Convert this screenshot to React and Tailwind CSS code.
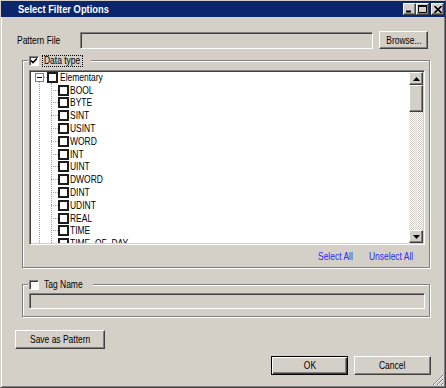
const items = ["BOOL","BYTE","SINT","USINT","WORD","INT","UINT","DWORD","DINT","UDINT","REAL","TIME","TIME_OF_DAY","DATE"];

function T({ children, className = "" }) {
  return <span className={"inline-block whitespace-nowrap origin-left scale-x-[0.77] " + className}>{children}</span>;
}
function TC({ children }) {
  return <span className="inline-block whitespace-nowrap origin-center scale-x-[0.77]">{children}</span>;
}

function RaisedBtn({ className = "", children }) {
  return (
    <div className={"flex items-center justify-center bg-[#d4d0c8] border border-t-white border-l-white border-r-[#404040] border-b-[#404040] shadow-[inset_-1px_-1px_0_#808080] " + className}>
      {children}
    </div>
  );
}

function TreeBox() {
  return <div className="w-[11px] h-[11px] shrink-0 bg-white border-2 border-[#1c1c1c]" />;
}

function SunkenCheck({ checked }) {
  return (
    <div className="w-[10px] h-[10px] shrink-0 bg-white border border-t-[#808080] border-l-[#808080] border-r-white border-b-white shadow-[inset_1px_1px_0_#404040] flex items-center justify-center">
      {checked && (
        <svg width="8" height="8" viewBox="0 0 8 8">
          <path d="M1 3.5 L3 5.5 L7 1.5" stroke="#000" strokeWidth="1.6" fill="none" />
        </svg>
      )}
    </div>
  );
}

function ScrollArrow({ up }) {
  return (
    <RaisedBtn className="h-[13px] w-full">
      <svg width="7" height="4" viewBox="0 0 7 4">
        {up ? <path d="M3.5 0 L7 4 L0 4 Z" fill="#000" /> : <path d="M0 0 L7 0 L3.5 4 Z" fill="#000" />}
      </svg>
    </RaisedBtn>
  );
}

export default function App() {
  return (
    <div className="w-[446px] h-[388px] bg-[#d4d0c8] relative overflow-hidden flex flex-col border border-t-[#d4d0c8] border-l-[#d4d0c8] border-r-[#404040] border-b-[#404040] shadow-[inset_1px_1px_0_#fff,inset_-1px_-1px_0_#808080] font-['Liberation_Sans',Arial,sans-serif] text-[11px] text-black leading-none">
      {/* Title bar */}
      <div className="h-[16px] bg-[#0c266e] flex items-center justify-between pl-[17px] pr-[1px] shrink-0">
        <span className="inline-block whitespace-nowrap origin-left scale-x-[0.85] text-white font-bold text-[11px]">Select Filter Options</span>
        <div className="flex items-center">
          <RaisedBtn className="w-[13px] h-[12px]">
            <svg width="9" height="8" viewBox="0 0 9 8"><rect x="1" y="5.5" width="5" height="2" fill="#000" /></svg>
          </RaisedBtn>
          <RaisedBtn className="w-[13px] h-[12px]">
            <svg width="9" height="8" viewBox="0 0 9 8"><path d="M0.5 0.5 H8.5 V7.5 H0.5 Z" stroke="#000" fill="none" /><rect x="0" y="0" width="9" height="2" fill="#000" /></svg>
          </RaisedBtn>
          <RaisedBtn className="w-[13px] h-[12px] ml-[2px]">
            <svg width="8" height="7" viewBox="0 0 8 7"><path d="M0.5 0 L7.5 7 M7.5 0 L0.5 7" stroke="#000" strokeWidth="1.6" /></svg>
          </RaisedBtn>
        </div>
      </div>

      <div className="flex flex-col px-[14px]">
        {/* Pattern file row */}
        <div className="mt-[14px] h-[18px] flex items-center">
          <span className="ml-[2px] w-[63px]"><T>Pattern File</T></span>
          <div className="w-[293px] h-[17px] border border-t-[#808080] border-l-[#808080] border-r-white border-b-white shadow-[inset_1px_1px_0_#404040]" />
          <RaisedBtn className="ml-[6px] w-[49px] h-[18px]"><TC>Browse...</TC></RaisedBtn>
        </div>

        {/* Data type group */}
        <fieldset className="mt-[5px] ml-[7px] w-[408px] min-w-0 border border-[#808080] shadow-[inset_1px_1px_0_#fff,1px_1px_0_#fff] pt-[3px] pb-[4px] px-0">
          <legend className="ml-[5px] pl-[1px] pr-[8px] bg-[#d4d0c8]">
            <div className="h-[13px] flex items-center">
              <SunkenCheck checked />
              <span className="ml-[3px] w-[41px] pl-[1px] h-[12px] flex items-center border border-dotted border-black"><T>Data type</T></span>
            </div>
          </legend>
          <div className="pl-[6px]">
            <div className="w-[396px] h-[175px] flex border border-t-[#808080] border-l-[#808080] border-r-white border-b-white shadow-[inset_1px_1px_0_#404040,inset_-1px_-1px_0_#d4d0c8] p-[1px]">
              <div className="relative flex-1 bg-white overflow-hidden">
                <div className="absolute left-[8px] top-[10px] bottom-0 border-l border-dotted border-[#a0a0a0]" />
                <div className="absolute left-[20px] top-[11px] bottom-0 border-l border-dotted border-[#a0a0a0]" />
                <div className="-mt-[1px] flex flex-col">
                  <div className="h-[12.8px] flex items-center pl-[4px]">
                    <div className="w-[9px] h-[9px] bg-white border border-[#808080] flex items-center justify-center shrink-0">
                      <div className="w-[5px] h-[1px] bg-black" />
                    </div>
                    <div className="w-[3px] border-t border-dotted border-[#a0a0a0]" />
                    <TreeBox />
                    <span className="ml-[2px]"><T>Elementary</T></span>
                  </div>
                  {items.map((t) => (
                    <div key={t} className="h-[12.8px] flex items-center pl-[20px] shrink-0">
                      <div className="w-[7px] border-t border-dotted border-[#a0a0a0]" />
                      <TreeBox />
                      <span className="ml-[1px]"><T className="scale-x-[0.8]">{t}</T></span>
                    </div>
                  ))}
                </div>
              </div>
              <div className="w-[14px] flex flex-col">
                <ScrollArrow up />
                <RaisedBtn className="h-[27px] w-full" />
                <div className="flex-1 bg-[repeating-conic-gradient(#d4d0c8_0_25%,#ffffff_0_50%)] bg-[length:2px_2px]" />
                <ScrollArrow />
              </div>
            </div>
            <div className="mt-[5px] h-[13px] w-[396px] flex items-center justify-end gap-[16px] pr-[11px] text-[#2a2aff]">
              <span className="w-[35px] underline"><T>Select All</T></span>
              <span className="w-[45px] underline"><T>Unselect All</T></span>
            </div>
          </div>
        </fieldset>

        {/* Tag name group */}
        <fieldset className="mt-[10px] ml-[7px] w-[408px] min-w-0 border border-[#808080] shadow-[inset_1px_1px_0_#fff,1px_1px_0_#fff] pt-[2px] pb-[7px] px-0">
          <legend className="ml-[5px] pl-[1px] pr-[9px] bg-[#d4d0c8]">
            <div className="h-[13px] flex items-center">
              <SunkenCheck />
              <span className="ml-[5px] w-[40px]"><T>Tag Name</T></span>
            </div>
          </legend>
          <div className="pl-[6px]">
            <div className="w-[396px] h-[16px] border border-t-[#808080] border-l-[#808080] border-r-white border-b-white shadow-[inset_1px_1px_0_#404040]" />
          </div>
        </fieldset>

        <RaisedBtn className="mt-[13px] w-[90px] h-[19px]"><TC>Save as Pattern</TC></RaisedBtn>

        <div className="mt-[7px] flex justify-end gap-[6px]">
          <div className="w-[77px] h-[19px] flex items-center justify-center border border-black shadow-[inset_1px_1px_0_#fff,inset_-1px_-1px_0_#404040,inset_-2px_-2px_0_#808080]"><TC>OK</TC></div>
          <RaisedBtn className="w-[77px] h-[19px]"><TC>Cancel</TC></RaisedBtn>
        </div>
      </div>

      {/* Resize grip */}
      <svg className="absolute right-[1px] bottom-[1px]" width="12" height="12" viewBox="0 0 12 12">
        <path d="M11 1 L1 11 M11 5 L5 11 M11 9 L9 11" stroke="#808080" strokeWidth="1" />
        <path d="M11 2 L2 11 M11 6 L6 11 M11 10 L10 11" stroke="#ffffff" strokeWidth="1" />
      </svg>
    </div>
  );
}
